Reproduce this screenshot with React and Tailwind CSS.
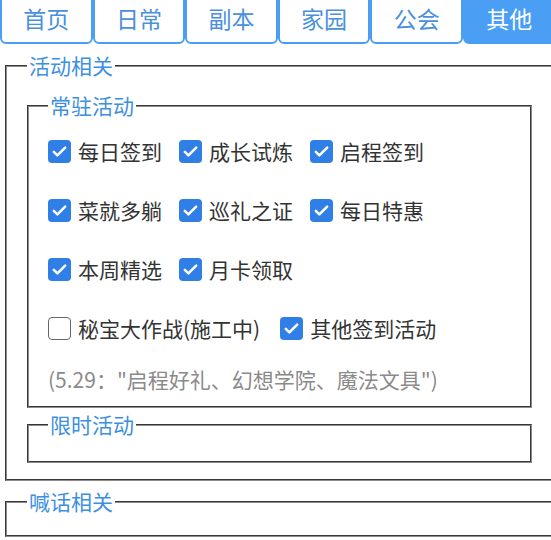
import React from "react";

const FONT = { fontFamily: '"Noto Sans CJK SC", "Noto Sans", sans-serif' };

function Check({ checked }) {
  if (!checked) {
    return (
      <span className="w-[23px] h-[23px] rounded-[4px] border-[1.5px] border-[#666] bg-white shrink-0 mr-[7px]" />
    );
  }
  return (
    <span className="w-[23px] h-[23px] rounded-[4px] bg-[#2f7fe6] shrink-0 mr-[7px] flex items-center justify-center">
      <svg width="17" height="17" viewBox="0 0 24 24" fill="none">
        <path d="M4 12.5l5 5L20 6.5" stroke="white" strokeWidth="3.6" strokeLinecap="round" strokeLinejoin="round" />
      </svg>
    </span>
  );
}

function Item({ checked, label, extra }) {
  return (
    <div className={extra ? "flex items-center mr-[20px]" : "flex items-center mr-[17px]"}>
      <Check checked={checked} />
      <span className="text-[21px] leading-[25px] text-[#333]">{label}</span>
    </div>
  );
}

const tabs = ["首页", "日常", "副本", "家园", "公会", "其他"];

export default function App() {
  return (
    <div className="w-[551px] h-[540px] overflow-hidden bg-white" style={FONT}>
      <div className="w-[560px]">
        <div className="flex -mt-[6px]">
          {tabs.map((t, i) => (
            <div
              key={t}
              className={
                i === 5
                  ? "w-[92.6px] h-[50px] shrink-0 rounded-b-[6px] border-2 border-[#4a9ff5] bg-[#4a9ff5] text-white text-[23px] flex items-center justify-center pb-[1px]"
                  : "w-[92.6px] h-[50px] shrink-0 rounded-b-[6px] border-2 border-[#4a9ff5] bg-white text-[#4a90dc] text-[23px] flex items-center justify-center pb-[1px]"
              }
            >
              {t}
            </div>
          ))}
        </div>

        <fieldset className="ml-[5px] w-[549px] mt-[9px] border-2 [border-style:groove] border-[#8c8c8c] px-[20px] pt-[15px] pb-[16px]">
          <legend className="px-[2px] text-[21px] leading-[25px] text-[#3d8fe2]">活动相关</legend>

          <fieldset className="border-2 [border-style:groove] border-[#8c8c8c] pl-[19px] pr-[10px] pt-[4px] pb-[14px]">
            <legend className="px-[2px] text-[21px] leading-[25px] text-[#3d8fe2]">常驻活动</legend>
            <div className="flex items-center h-[59px]">
              <Item checked label="每日签到" />
              <Item checked label="成长试炼" />
              <Item checked label="启程签到" />
            </div>
            <div className="flex items-center h-[59px]">
              <Item checked label="菜就多躺" />
              <Item checked label="巡礼之证" />
              <Item checked label="每日特惠" />
            </div>
            <div className="flex items-center h-[59px]">
              <Item checked label="本周精选" />
              <Item checked label="月卡领取" />
            </div>
            <div className="flex items-center h-[59px]">
              <Item checked={false} extra label="秘宝大作战(施工中)" />
              <Item checked label="其他签到活动" />
            </div>
            <div className="mt-[9px] text-[21px] leading-[25px] text-[#8a8a8a] whitespace-nowrap">
              (5.29："启程好礼、幻想学院、魔法文具")
            </div>
          </fieldset>

          <fieldset className="mt-[4px] border-2 [border-style:groove] border-[#8c8c8c] pl-[19px] pb-[24px]">
            <legend className="px-[2px] text-[21px] leading-[25px] text-[#3d8fe2]">限时活动</legend>
          </fieldset>
        </fieldset>

        <fieldset className="ml-[5px] w-[549px] mt-[8px] border-2 [border-style:groove] border-[#8c8c8c] px-[20px] pb-[21px]">
          <legend className="px-[2px] text-[21px] leading-[25px] text-[#3d8fe2]">喊话相关</legend>
        </fieldset>
      </div>
    </div>
  );
}
